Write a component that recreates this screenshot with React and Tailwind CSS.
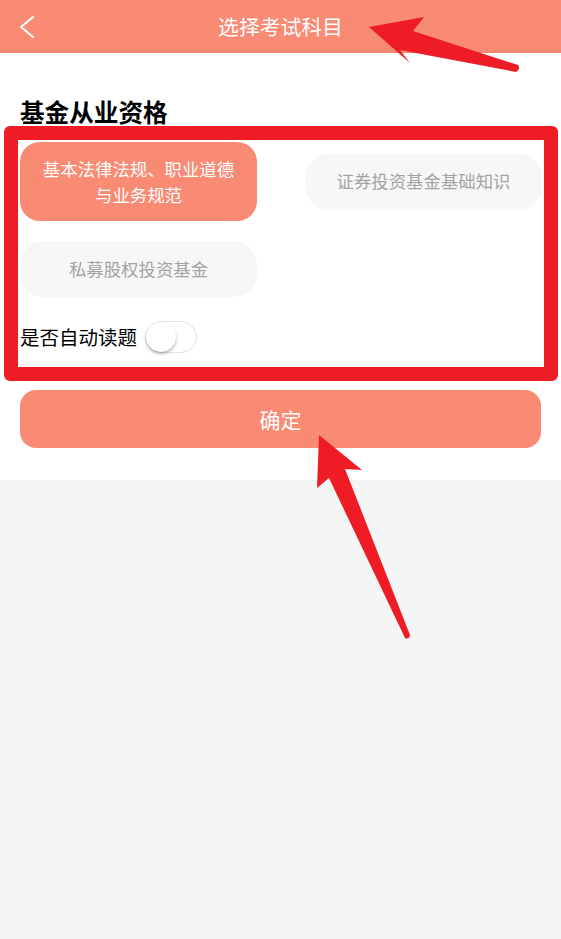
import React from "react";

const font = { fontFamily: '"Noto Sans CJK SC", "Noto Sans", sans-serif' };

export default function App() {
  return (
    <div className="relative w-full min-h-[939px] bg-[#f4f5f5] overflow-hidden" style={font}>
      {/* Header */}
      <div className="h-[53px] bg-[#f98a73] flex items-center justify-center relative">
        <svg className="absolute left-[16px] top-[13px]" width="22" height="28" viewBox="0 0 22 28">
          <path d="M17 4 L5 14 L17 24" fill="none" stroke="#ffffff" strokeWidth="2" strokeLinecap="round" strokeLinejoin="round" />
        </svg>
        <span className="text-white text-[20.8px] leading-none">选择考试科目</span>
      </div>

      {/* White content */}
      <div className="bg-white pb-[32px]">
        <h1 className="pt-[46px] pl-[20px] text-[24.6px] leading-[24px] font-bold text-black">基金从业资格</h1>

        <div className="mt-[19px] pl-[20px] pr-[19px] grid grid-cols-[237px_237px] gap-x-[48px] gap-y-[20px] items-center">
          <div className="h-[79px] rounded-[20px] bg-[#f98a73] text-white text-[17.4px] leading-[26px] flex items-center justify-center text-center px-[20px]">
            基本法律法规、职业道德与业务规范
          </div>
          <div className="h-[56px] rounded-[24px] bg-[#f7f7f7] text-[#a3a3a3] text-[17.4px] flex items-center justify-center">
            证券投资基金基础知识
          </div>
          <div className="h-[56px] rounded-[24px] bg-[#f7f7f7] text-[#a3a3a3] text-[17.4px] flex items-center justify-center">
            私募股权投资基金
          </div>
        </div>

        <div className="mt-[24px] pl-[20px] flex items-center">
          <span className="text-[19.5px] leading-none text-black">是否自动读题</span>
          <div className="ml-[8px] w-[52px] h-[32px] rounded-full border border-[#e3e3e3] bg-white relative">
            <div className="absolute left-0 top-0 w-[30px] h-[30px] rounded-full bg-white shadow-[0_2px_3px_rgba(0,0,0,0.3)]" />
          </div>
        </div>

        <div className="mt-[37px] mx-[20px] h-[58px] rounded-[16px] bg-[#f98a73] flex items-center justify-center">
          <span className="text-white text-[21px] leading-none">确定</span>
        </div>
      </div>

      {/* Annotation: red box */}
      <div className="absolute left-[4px] top-[126px] w-[554px] h-[255px] border-[14px] border-[#ee1c25] rounded-[6px] pointer-events-none" />

      {/* Annotation: arrows */}
      <svg className="absolute left-0 top-0 pointer-events-none" width="561" height="939" viewBox="0 0 561 939">
        <path
          d="M369 27 L424 17 L413 31 L518 65 Q521 69 516 72 L400 50 L410 63 Z"
          fill="#ee1c25"
          strokeLinejoin="round"
        />
        <path
          d="M319 435 L362 470 L345 469 L410 635 Q409 640 405 638 L329 478 L317 488 Z"
          fill="#ee1c25"
          strokeLinejoin="round"
        />
      </svg>
    </div>
  );
}
